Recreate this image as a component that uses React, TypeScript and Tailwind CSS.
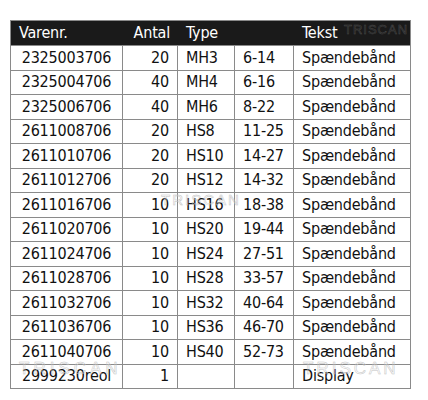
const rows = [
  ["2325003706", "20", "MH3", "6-14", "Spændebånd"],
  ["2325004706", "40", "MH4", "6-16", "Spændebånd"],
  ["2325006706", "40", "MH6", "8-22", "Spændebånd"],
  ["2611008706", "20", "HS8", "11-25", "Spændebånd"],
  ["2611010706", "20", "HS10", "14-27", "Spændebånd"],
  ["2611012706", "20", "HS12", "14-32", "Spændebånd"],
  ["2611016706", "10", "HS16", "18-38", "Spændebånd"],
  ["2611020706", "10", "HS20", "19-44", "Spændebånd"],
  ["2611024706", "10", "HS24", "27-51", "Spændebånd"],
  ["2611028706", "10", "HS28", "33-57", "Spændebånd"],
  ["2611032706", "10", "HS32", "40-64", "Spændebånd"],
  ["2611036706", "10", "HS36", "46-70", "Spændebånd"],
  ["2611040706", "10", "HS40", "52-73", "Spændebånd"],
  ["2999230reol", "1", "", "", "Display"],
];

// faint outlined logo text printed over the table
const Watermark = ({ className }: { className: string }) => (
  <span
    className={
      "absolute pointer-events-none font-['Liberation_Sans',sans-serif] font-normal text-transparent " +
      className
    }
  >
    TRISCAN
  </span>
);

export default function App() {
  return (
    <div className="w-[428px] h-[400px] bg-white pt-5 pl-[10px] font-['DejaVu_Sans_Condensed','DejaVu_Sans',sans-serif] text-[16px] tracking-[-0.2px] leading-none text-[#111]">
      <div className="relative w-[401px] overflow-hidden border border-[#8a8a8a]">
        <div className="grid grid-cols-[112px_55px_57px_59px_1fr] h-[24px] items-center bg-[#1a1a1a] text-white">
          <div className="pl-2">Varenr.</div>
          <div className="text-right pr-2">Antal</div>
          <div className="pl-2">Type</div>
          <div />
          <div className="pl-2">Tekst</div>
        </div>
        {rows.map((r) => (
          <div
            key={r[0]}
            className="grid grid-cols-[112px_55px_57px_59px_1fr] h-[24.5px] border-t border-[#8a8a8a]"
          >
            <div className="flex items-center justify-center border-r border-[#8a8a8a]">{r[0]}</div>
            <div className="flex items-center justify-end pr-2 border-r border-[#8a8a8a]">{r[1]}</div>
            <div className="flex items-center pl-2 border-r border-[#8a8a8a]">{r[2]}</div>
            <div className="flex items-center pl-2 border-r border-[#8a8a8a]">{r[3]}</div>
            <div className="flex items-center pl-2">{r[4]}</div>
          </div>
        ))}
        <Watermark className="left-[333px] top-[2px] text-[13px] tracking-[1px] [-webkit-text-stroke:0.5px_#4a4a4a]" />
        <Watermark className="left-[150px] top-[171px] text-[15px] tracking-[2px] [-webkit-text-stroke:0.5px_#c4c4c4]" />
        <Watermark className="left-[8px] top-[339px] text-[17px] tracking-[4px] [-webkit-text-stroke:0.5px_#c4c4c4]" />
        <Watermark className="left-[292px] top-[339px] text-[17px] tracking-[3px] [-webkit-text-stroke:0.5px_#c4c4c4]" />
      </div>
    </div>
  );
}
